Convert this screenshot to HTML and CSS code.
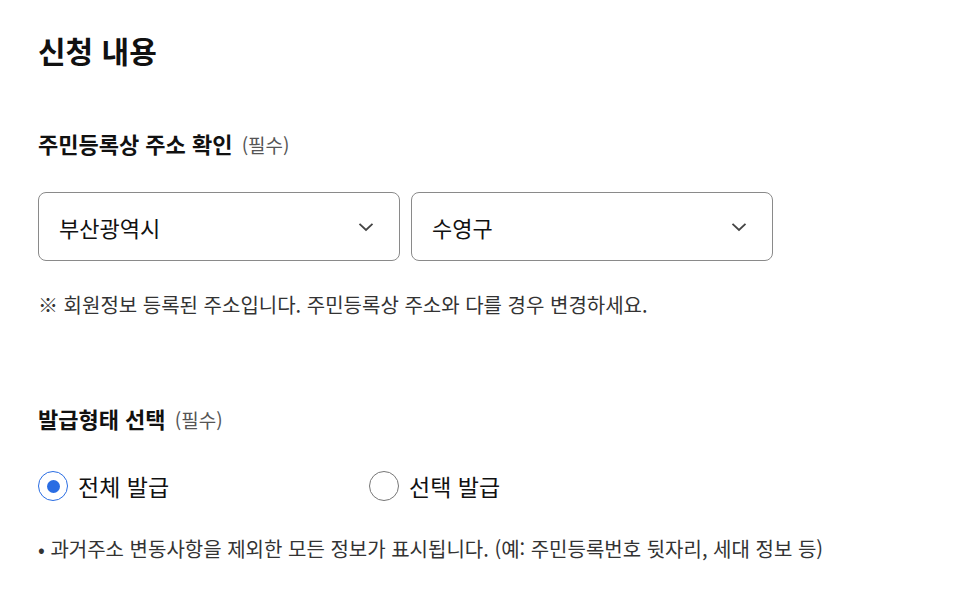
FILE: index.html
```html
<!DOCTYPE html>
<html lang="ko">
<head>
<meta charset="utf-8">
<link rel="stylesheet" href="styles.css">
</head>
<body>
<main class="page">
  <h1 class="title">신청 내용</h1>

  <section class="section">
    <h2 class="label">주민등록상 주소 확인 <span class="req">(필수)</span></h2>
    <div class="selects">
      <div class="select">
        <span class="select-text">부산광역시</span>
        <svg class="chev" width="16" height="10" viewBox="0 0 16 10"><path d="M1.5 1.8 L8 8 L14.5 1.8" fill="none" stroke="#444" stroke-width="1.8"/></svg>
      </div>
      <div class="select">
        <span class="select-text">수영구</span>
        <svg class="chev" width="16" height="10" viewBox="0 0 16 10"><path d="M1.5 1.8 L8 8 L14.5 1.8" fill="none" stroke="#444" stroke-width="1.8"/></svg>
      </div>
    </div>
    <p class="notice">※ 회원정보 등록된 주소입니다. 주민등록상 주소와 다를 경우 변경하세요.</p>
  </section>

  <section class="section section-2">
    <h2 class="label">발급형태 선택 <span class="req">(필수)</span></h2>
    <div class="radios">
      <label class="radio">
        <span class="dot checked"></span>
        <span class="radio-text">전체 발급</span>
      </label>
      <label class="radio">
        <span class="dot"></span>
        <span class="radio-text">선택 발급</span>
      </label>
    </div>
    <p class="foot">• 과거주소 변동사항을 제외한 모든 정보가 표시됩니다. (예: 주민등록번호 뒷자리, 세대 정보 등)</p>
  </section>
</main>
</body>
</html>
```

FILE: styles.css
```css
html, body {
  margin: 0;
  padding: 0;
  background: #fff;
}
body {
  font-family: "Noto Sans CJK KR", "Noto Sans", sans-serif;
  color: #222;
}
.page {
  padding: 30px 38px 0 38px;
}
.title {
  margin: 0;
  font-size: 30px;
  line-height: 40px;
  font-weight: 700;
  color: #111;
}
.section {
  margin-top: 58px;
}
.label {
  margin: 0;
  font-size: 22px;
  line-height: 30px;
  font-weight: 700;
  color: #111;
}
.req {
  font-size: 19px;
  font-weight: 400;
  color: #555;
  margin-left: 3px;
}
.selects {
  display: flex;
  gap: 11px;
  margin-top: 32px;
}
.select {
  box-sizing: border-box;
  width: 362px;
  height: 69px;
  border: 1px solid #8a8a8a;
  border-radius: 8px;
  display: flex;
  align-items: center;
  justify-content: space-between;
  padding: 0 25px 0 20px;
}
.select-text {
  font-size: 22px;
  color: #111;
}
.chev {
  display: block;
}
.notice {
  margin: 30px 0 0 0;
  font-size: 20px;
  line-height: 28px;
  color: #333;
}
.section-2 {
  margin-top: 84px;
}
.radios {
  display: flex;
  margin-top: 35px;
}
.radio {
  display: flex;
  align-items: center;
  gap: 10px;
  width: 331px;
  height: 32px;
}
.dot {
  box-sizing: border-box;
  width: 30px;
  height: 30px;
  border-radius: 50%;
  border: 1.5px solid #777;
  display: flex;
  align-items: center;
  justify-content: center;
}
.dot.checked {
  border-color: #2a6de3;
}
.dot.checked::after {
  content: "";
  width: 13px;
  height: 13px;
  border-radius: 50%;
  background: #2a6de3;
}
.radio-text {
  font-size: 23px;
  color: #111;
}
.foot {
  margin: 33px 0 0 0;
  font-size: 20px;
  line-height: 28px;
  color: #333;
}
```
